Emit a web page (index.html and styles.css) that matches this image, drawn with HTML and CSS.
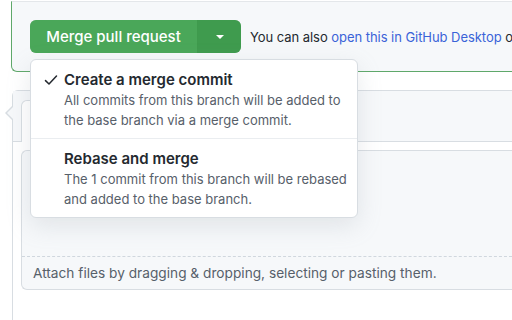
FILE: index.html
```html
<!DOCTYPE html>
<html lang="en">
<head>
  <meta charset="UTF-8" />
  <title>Merge pull request</title>
  <link rel="stylesheet" href="styles.css">
</head>
<body>

<div class="merge-box">
  <div class="merge-row">
    <div class="btn-group">
      <button class="btn-merge">Merge pull request</button>
      <button class="btn-caret"><span class="caret"></span></button>
    </div>
    <span class="hint">You can also <a href="#">open this in GitHub Desktop</a> or view command line instructions.</span>
  </div>
</div>

<div class="comment-box">
  <div class="comment-head">
    <div class="tab"></div>
  </div>
  <div class="comment-body">
    <div class="editor">
      <div class="textarea"></div>
      <div class="attach">Attach files by dragging &amp; dropping, selecting or pasting them.</div>
    </div>
  </div>
</div>

<div class="menu">
  <div class="menu-item">
    <svg class="check" width="16" height="16" viewBox="0 0 16 16">
      <path d="M2.5 8.6 L6 12 L13.5 4" fill="none" stroke="#24292f" stroke-width="1.5" stroke-linecap="round" stroke-linejoin="round"/>
    </svg>
    <div class="item-text">
      <div class="item-title">Create a merge commit</div>
      <div class="item-desc">All commits from this branch will be added to the base branch via a merge commit.</div>
    </div>
  </div>
  <div class="menu-item">
    <span class="check"></span>
    <div class="item-text">
      <div class="item-title">Rebase and merge</div>
      <div class="item-desc">The 1 commit from this branch will be rebased and added to the base branch.</div>
    </div>
  </div>
</div>

</body>
</html>
```

FILE: styles.css
```css
body {
  margin: 0;
  width: 512px;
  height: 320px;
  overflow: hidden;
  background: #fff;
  font-family: Inter, "Liberation Sans", sans-serif;
  color: #24292f;
  position: relative;
}

.merge-box {
  margin: 1px 0 0 11px;
  border-top: 1px solid #e4e7ea;
  border-left: 1px solid #5fa86a;
  border-bottom: 1px solid #5fa86a;
  border-bottom-left-radius: 6px;
  background: #f6f8fa;
  padding: 18px 0 0 18px;
  height: 51px;
  overflow: hidden;
}

.merge-row {
  display: flex;
  align-items: center;
  white-space: nowrap;
}

.btn-group {
  display: flex;
  flex-shrink: 0;
  height: 33px;
  border-radius: 6px;
  overflow: hidden;
  box-shadow: 0 0 0 1px rgba(40, 120, 50, 0.35) inset;
}

.btn-merge, .btn-caret {
  border: none;
  margin: 0;
  padding: 0;
  color: #fff;
  font-family: inherit;
  font-size: 15px;
  font-weight: 500;
  cursor: pointer;
}

.btn-merge {
  width: 168px;
  background: #4aa759;
  border-right: 1px solid #3f9a4d;
}

.btn-caret {
  width: 43px;
  background: #3f9b4e;
  display: flex;
  align-items: center;
  justify-content: center;
}

.caret {
  width: 0;
  height: 0;
  border-left: 4px solid transparent;
  border-right: 4px solid transparent;
  border-top: 4px solid #fff;
}

.hint {
  margin-left: 9px;
  font-size: 13px;
  letter-spacing: -0.05px;
}

.hint a {
  color: #3a63d8;
  text-decoration: none;
}

.comment-box {
  margin: 18px 0 0 12px;
  border-top: 1px solid #d8dde2;
  border-left: 1px solid #d8dde2;
  border-top-left-radius: 6px;
  height: 240px;
  position: relative;
}

.comment-box::before {
  content: "";
  position: absolute;
  left: -8px;
  top: 14px;
  width: 0;
  height: 0;
  border-top: 8px solid transparent;
  border-bottom: 8px solid transparent;
  border-right: 8px solid #d8dde2;
}

.comment-box::after {
  content: "";
  position: absolute;
  left: -6px;
  top: 15px;
  width: 0;
  height: 0;
  border-top: 7px solid transparent;
  border-bottom: 7px solid transparent;
  border-right: 7px solid #f6f8fa;
}

.comment-head {
  height: 50px;
  background: #f6f8fa;
  border-bottom: 1px solid #d8dde2;
  display: flex;
  align-items: flex-end;
  padding-left: 8px;
}

.tab {
  width: 60px;
  height: 41px;
  margin-bottom: -1px;
  background: #fff;
  border: 1px solid #d8dde2;
  border-bottom: none;
  border-top-left-radius: 6px;
  border-top-right-radius: 6px;
}

.comment-body {
  padding: 8px 0 0 8px;
}

.editor {
  border: 1px solid #d8dde2;
  border-right: none;
  border-radius: 6px 0 0 6px;
  background: #f6f8fa;
}

.textarea {
  height: 105px;
  border-bottom: 1px dashed #d0d7de;
}

.attach {
  height: 32px;
  line-height: 32px;
  padding-left: 11px;
  font-size: 13.7px;
  color: #57606a;
}

.menu {
  position: absolute;
  left: 30px;
  top: 59px;
  width: 326px;
  background: #fff;
  border: 1px solid #d8dde2;
  border-radius: 6px;
  box-shadow: 0 8px 24px rgba(140, 149, 159, 0.2);
}

.menu-item {
  display: flex;
  padding: 10px 12px 8px 12px;
}

.menu-item + .menu-item {
  border-top: 1px solid #eaedf0;
}

.check {
  width: 16px;
  height: 16px;
  margin: 2px 5px 0 0;
  flex-shrink: 0;
}

.item-title {
  font-size: 15px;
  font-weight: 600;
  line-height: 20px;
}

.item-desc {
  font-size: 13px;
  line-height: 20px;
  color: #57606a;
  width: 285px;
}
```
